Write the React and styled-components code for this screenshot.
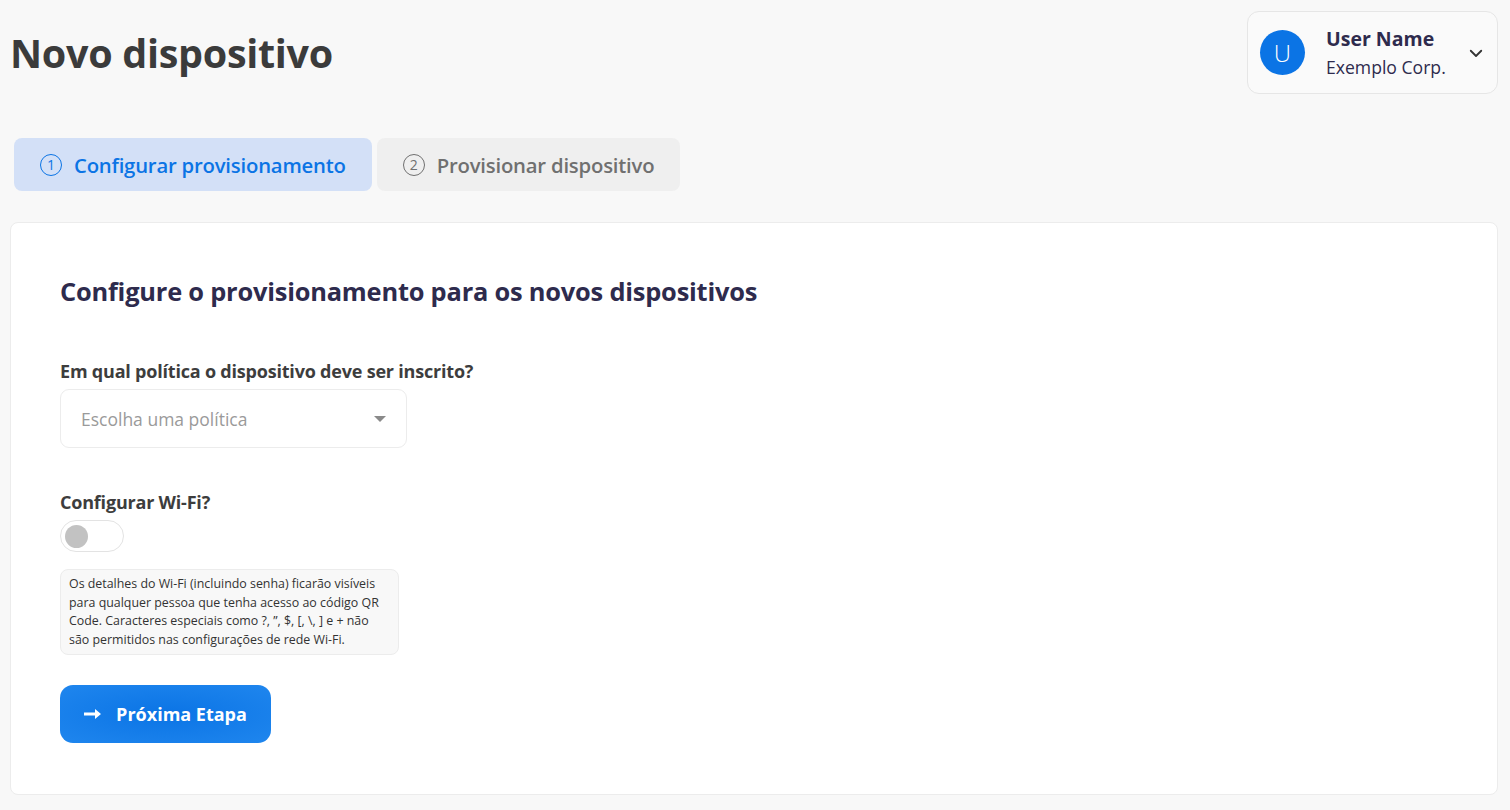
import React from 'react'
import styled, { createGlobalStyle } from 'styled-components'

const GlobalStyle = createGlobalStyle`
  html, body {
    margin: 0;
    padding: 0;
    background: #f8f8f8;
    font-family: "Open Sans", "Noto Sans", sans-serif;
  }
  * { box-sizing: border-box; }
`

const Page = styled.div`
  padding: 11px 12px 16px 10px;
  display: flex;
  flex-direction: column;
`

const Header = styled.header`
  display: flex;
  justify-content: space-between;
  align-items: flex-start;
`

const Title = styled.h1`
  margin: 23px 0 0;
  font-size: 39.5px;
  font-weight: 700;
  color: #3b3b3b;
  line-height: 1;
  letter-spacing: -0.3px;
`

const UserCard = styled.div`
  width: 251px;
  height: 83px;
  border: 1px solid #e6e6e6;
  border-radius: 12px;
  background: #fafafa;
  display: flex;
  align-items: center;
  padding: 0 13px 0 12px;
  gap: 21px;
  white-space: nowrap;
`

const Avatar = styled.div`
  flex: none;
  width: 45px;
  height: 45px;
  border-radius: 50%;
  background: #0b74e5;
  color: #fff;
  display: flex;
  align-items: center;
  justify-content: center;
  font-size: 24px;
  font-weight: 300;
`

const UserText = styled.div`
  display: flex;
  flex-direction: column;
  flex: 1;
  line-height: 29px;
`

const UserName = styled.span`
  font-size: 19.5px;
  font-weight: 700;
  color: #2e2b4d;
`

const Company = styled.span`
  font-size: 17.6px;
  color: #2e2b4d;
`

const Chevron = styled.svg`
  flex: none;
`

const Tabs = styled.nav`
  display: flex;
  gap: 5px;
  margin: 44px 0 0 4px;
`

const Tab = styled.div`
  height: 53px;
  padding: 0 26px;
  border-radius: 8px;
  display: flex;
  align-items: center;
  gap: 12px;
  font-size: 20.3px;
  font-weight: 600;
  background: ${p => (p.$active ? '#d3e0f7' : '#efefef')};
  color: ${p => (p.$active ? '#0b74e5' : '#707070')};
  letter-spacing: -0.2px;
`

const StepNum = styled.span`
  width: 22px;
  height: 22px;
  border-radius: 50%;
  border: 1px solid currentColor;
  display: inline-flex;
  align-items: center;
  justify-content: center;
  font-size: 14px;
  font-weight: 400;
`

const Card = styled.section`
  margin-top: 31px;
  background: #fff;
  border: 1px solid #ececec;
  border-radius: 8px;
  padding: 51px 49px 51px;
  display: flex;
  flex-direction: column;
  align-items: flex-start;
`

const CardTitle = styled.h2`
  margin: 0 0 51px;
  font-size: 25.4px;
  line-height: 34px;
  font-weight: 700;
  color: #2e2b4d;
  letter-spacing: -0.2px;
`

const Label = styled.label`
  font-size: 18px;
  line-height: 24px;
  font-weight: 700;
  color: #3d3d3d;
  margin-bottom: 6px;
  letter-spacing: -0.2px;
`

const Select = styled.div`
  width: 347px;
  height: 59px;
  border: 1px solid #ececec;
  border-radius: 9px;
  display: flex;
  align-items: center;
  justify-content: space-between;
  padding: 0 20px 0 20px;
  font-size: 17.5px;
  color: #9a9a9a;
  margin-bottom: 42px;
`

const Caret = styled.span`
  width: 0;
  height: 0;
  border-left: 6px solid transparent;
  border-right: 6px solid transparent;
  border-top: 6px solid #8a8a8a;
`

const Toggle = styled.div`
  width: 64px;
  height: 32px;
  border-radius: 16px;
  border: 1px solid #e3e3e3;
  background: #fff;
  display: flex;
  align-items: center;
  padding-left: 4px;
  margin-bottom: 17px;
`

const Knob = styled.span`
  width: 23px;
  height: 23px;
  border-radius: 50%;
  background: #c2c2c2;
`

const Note = styled.p`
  margin: 0 0 30px;
  width: 339px;
  padding: 5px 8px 4px 8px;
  background: #f8f8f8;
  border: 1px solid #ececec;
  border-radius: 8px;
  font-size: 12.4px;
  line-height: 18.7px;
  color: #333;
`

const Button = styled.button`
  width: 211px;
  height: 58px;
  border: none;
  border-radius: 13px;
  background: radial-gradient(ellipse at center, #0b74e5 0%, #1f86ee 100%);
  color: #fff;
  font-family: inherit;
  font-size: 18px;
  font-weight: 700;
  display: flex;
  align-items: center;
  justify-content: center;
  gap: 14px;
  cursor: pointer;
`

const App = () => {
  return (
    <>
      <GlobalStyle />
      <Page>
        <Header>
          <Title>Novo dispositivo</Title>
          <UserCard>
            <Avatar>U</Avatar>
            <UserText>
              <UserName>User Name</UserName>
              <Company>Exemplo Corp.</Company>
            </UserText>
            <Chevron width="18" height="18" viewBox="0 0 24 24" fill="none" stroke="#333" strokeWidth="2.4" strokeLinecap="round" strokeLinejoin="round">
              <path d="M5 9l7 7 7-7" />
            </Chevron>
          </UserCard>
        </Header>

        <Tabs>
          <Tab $active>
            <StepNum>1</StepNum>
            Configurar provisionamento
          </Tab>
          <Tab>
            <StepNum>2</StepNum>
            Provisionar dispositivo
          </Tab>
        </Tabs>

        <Card>
          <CardTitle>Configure o provisionamento para os novos dispositivos</CardTitle>

          <Label>Em qual política o dispositivo deve ser inscrito?</Label>
          <Select>
            Escolha uma política
            <Caret />
          </Select>

          <Label>Configurar Wi-Fi?</Label>
          <Toggle>
            <Knob />
          </Toggle>

          <Note>
            Os detalhes do Wi-Fi (incluindo senha) ficarão visíveis para qualquer pessoa que tenha acesso ao código QR Code. Caracteres especiais como ?, ”, $, [, \, ] e + não são permitidos nas configurações de rede Wi-Fi.
          </Note>

          <Button>
            <svg width="18" height="14" viewBox="0 0 18 14" fill="#fff">
              <path d="M0 5.6h11V2l6 5-6 5V8.4H0z" />
            </svg>
            Próxima Etapa
          </Button>
        </Card>
      </Page>
    </>
  )
}

export default App
